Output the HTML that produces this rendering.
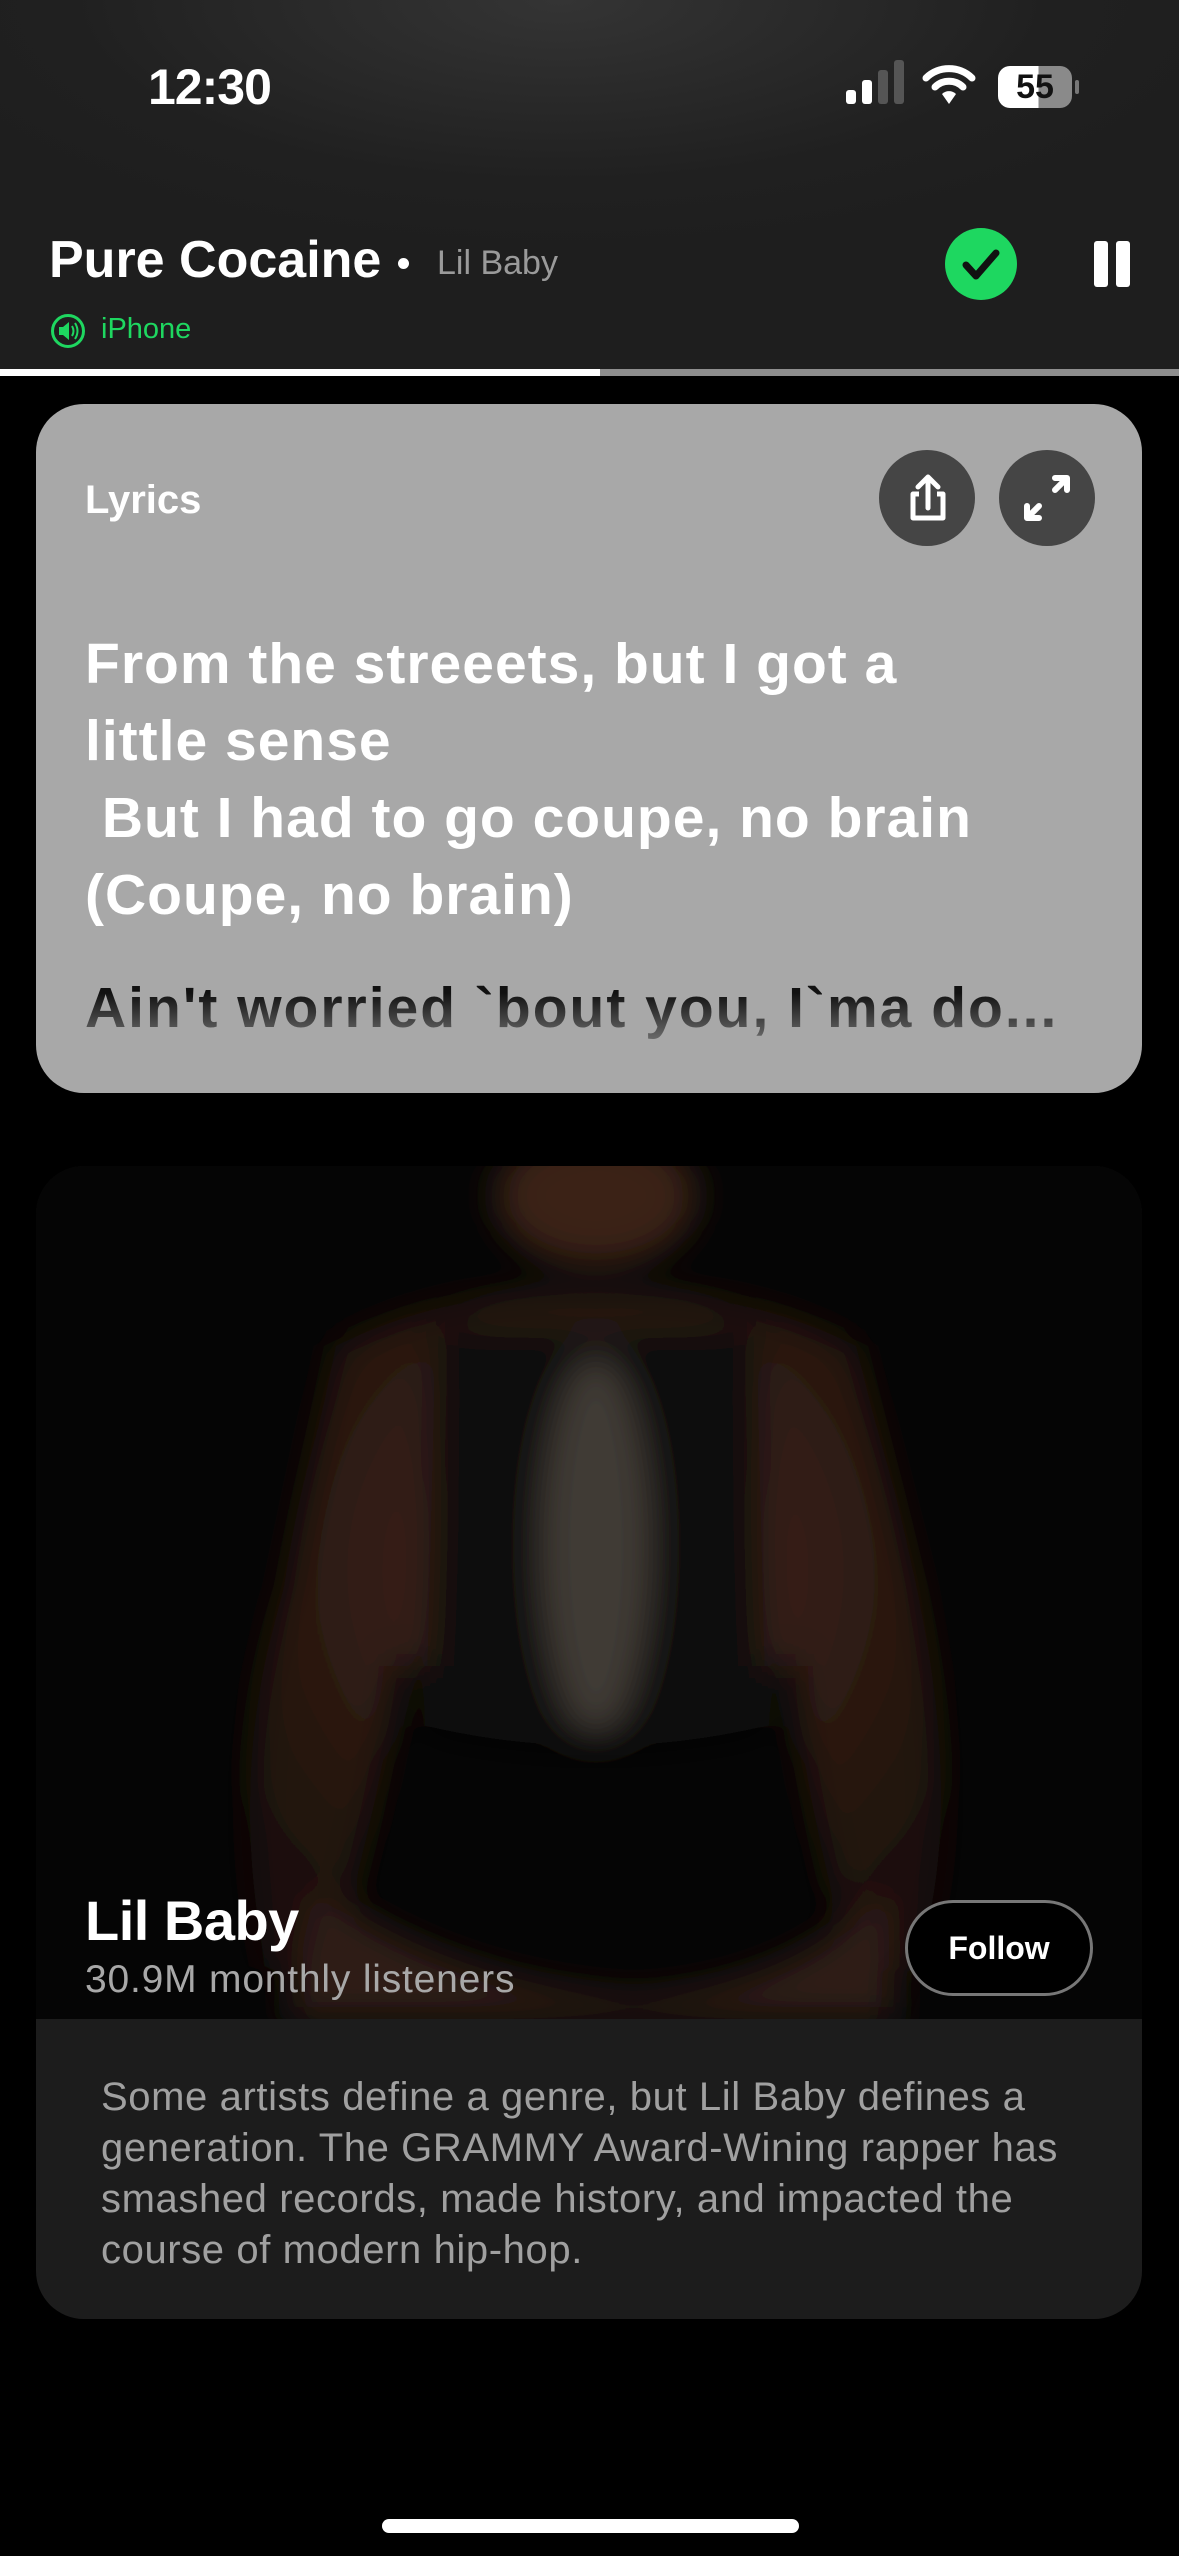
<!DOCTYPE html>
<html><head><meta charset="utf-8"><style>
*{margin:0;padding:0;box-sizing:border-box}
body{width:1179px;height:2556px;background:#000;font-family:"Liberation Sans",sans-serif;position:relative;overflow:hidden;color:#fff}
.hdr{position:absolute;left:0;top:0;width:1179px;height:372px;background:radial-gradient(ellipse 700px 260px at 560px 0,#343434,#202020 70%,#1e1e1e)}
.abs{position:absolute}
.card{position:absolute;left:36px;top:404px;width:1106px;height:689px;background:#a8a8a8;border-radius:48px}
.circ{position:absolute;width:96px;height:96px;border-radius:50%;background:#454545}
.lyr{position:absolute;left:85px;font-weight:bold;font-size:57px;letter-spacing:1px;line-height:77px;color:#fff}
.art{position:absolute;left:36px;top:1166px;width:1106px;height:1153px;border-radius:48px;overflow:hidden;background:#1c1c1c}
.img{position:absolute;left:0;top:0;width:1106px;height:853px;background:#050505}
</style></head><body>
<div class="hdr"></div>
<div class="abs" style="left:148px;top:58px;font-size:50px;font-weight:bold;letter-spacing:-1px">12:30</div>
<div class="abs" style="left:846px;top:90px;width:10px;height:14px;background:#fff;border-radius:3px"></div>
<div class="abs" style="left:862px;top:80px;width:10px;height:24px;background:#fff;border-radius:3px"></div>
<div class="abs" style="left:878px;top:70px;width:10px;height:34px;background:#555;border-radius:3px"></div>
<div class="abs" style="left:894px;top:60px;width:10px;height:44px;background:#555;border-radius:3px"></div>
<svg class="abs" style="left:922px;top:62px" width="54" height="44" viewBox="0 0 54 44"><path d="M4 16 A33 33 0 0 1 50 16" stroke="#fff" stroke-width="7" fill="none" stroke-linecap="round"/><path d="M13 25 A20 20 0 0 1 41 25" stroke="#fff" stroke-width="7" fill="none" stroke-linecap="round"/><path d="M20 32 L27 42 L34 32 A10 10 0 0 0 20 32Z" fill="#fff"/></svg>
<div class="abs" style="left:998px;top:66px;width:74px;height:42px;border-radius:12px;background:linear-gradient(90deg,#fff 0 55%,#8a8a8a 55%);color:#111;font-weight:bold;font-size:34px;text-align:center;line-height:42px">55</div>
<div class="abs" style="left:1075px;top:80px;width:4px;height:14px;background:#777;border-radius:2px"></div>

<div class="abs" style="left:49px;top:230px;font-size:52px;font-weight:bold;letter-spacing:0px">Pure Cocaine</div>
<div class="abs" style="left:398px;top:258px;width:11px;height:11px;border-radius:50%;background:#fff"></div>
<div class="abs" style="left:437px;top:244px;font-size:34px;color:#9a9a9a">Lil Baby</div>
<svg class="abs" style="left:50px;top:313px" width="36" height="36" viewBox="0 0 36 36"><circle cx="18" cy="18" r="15.5" fill="none" stroke="#1ed760" stroke-width="3"/><path d="M9 14h4l6-5v18l-6-5H9z" fill="#1ed760"/><path d="M22 13q3 5 0 10M25 10q5 8 0 16" stroke="#1ed760" stroke-width="2" fill="none"/></svg>
<div class="abs" style="left:101px;top:313px;font-size:29px;color:#1ed760">iPhone</div>
<svg class="abs" style="left:944px;top:227px" width="74" height="74" viewBox="0 0 74 74"><circle cx="37" cy="37" r="36" fill="#1ed760"/><path d="M22 38l10 11 20-23" stroke="#111" stroke-width="7" fill="none" stroke-linecap="round" stroke-linejoin="round"/></svg>
<div class="abs" style="left:1094px;top:241px;width:14px;height:46px;background:#fff;border-radius:3px"></div>
<div class="abs" style="left:1116px;top:241px;width:14px;height:46px;background:#fff;border-radius:3px"></div>
<div class="abs" style="left:0;top:369px;width:600px;height:7px;background:#fff"></div>
<div class="abs" style="left:600px;top:369px;width:579px;height:7px;background:#8e8e8e"></div>

<div class="card"></div>
<div class="abs" style="left:85px;top:478px;font-size:40px;font-weight:bold">Lyrics</div>
<div class="circ" style="left:879px;top:450px"></div>
<div class="circ" style="left:999px;top:450px"></div>
<svg class="abs" style="left:879px;top:450px" width="96" height="96" viewBox="0 0 96 96"><path d="M40 44h-6v24h30V44h-6" stroke="#fff" stroke-width="5" fill="none" stroke-linejoin="round"/><path d="M49 58V28M39 37l10-10 10 10" stroke="#fff" stroke-width="5" fill="none" stroke-linecap="round" stroke-linejoin="round"/></svg>
<svg class="abs" style="left:999px;top:450px" width="96" height="96" viewBox="0 0 96 96"><path d="M56 40l12-12M56 28h12v12M40 56L28 68M28 56v12h12" stroke="#fff" stroke-width="6" fill="none" stroke-linecap="round" stroke-linejoin="round"/></svg>
<div class="lyr" style="top:626px">From the streeets, but I got a<br>little sense<br>&nbsp;But I had to go coupe, no brain<br>(Coupe, no brain)</div>
<div class="lyr" style="top:970px;letter-spacing:2px;background:linear-gradient(#111 30%,#6a6a6a 90%);-webkit-background-clip:text;background-clip:text;color:transparent">Ain't worried `bout you, I`ma do...</div>

<div class="art">
<div class="img">
<svg width="1106" height="853" viewBox="0 0 1106 853">
<defs>
<filter id="b"><feGaussianBlur stdDeviation="18"/></filter>
<radialGradient id="sk" cx="50%" cy="40%" r="60%"><stop offset="0" stop-color="#4a2c1f"/><stop offset="1" stop-color="#1e110b"/></radialGradient>
</defs>
<rect width="1106" height="853" fill="#050505"/>
<g filter="url(#b)">
<ellipse cx="560" cy="30" rx="100" ry="70" fill="#3a2218"/>
<path d="M300 180 Q420 120 560 130 Q700 120 820 180 L880 420 Q930 650 880 800 L820 820 Q760 600 760 500 L360 500 Q350 620 290 820 L230 800 Q190 600 250 420Z" fill="url(#sk)"/>
<path d="M400 160 L720 160 L730 560 Q560 600 390 560Z" fill="#080808"/>
<path d="M280 720 Q420 820 600 830 Q760 820 850 720 L860 853 L250 853Z" fill="#2e1c13"/>
<ellipse cx="560" cy="380" rx="55" ry="190" fill="#6e665c" opacity="0.55"/>
</g>
</svg>
</div>
<div class="abs" style="left:49px;top:722px;font-size:56px;font-weight:bold;letter-spacing:-0.5px">Lil Baby</div>
<div class="abs" style="left:49px;top:792px;font-size:39px;color:#a8a8a8;letter-spacing:0.8px">30.9M monthly listeners</div>
<div class="abs" style="left:869px;top:734px;width:188px;height:96px;border:3px solid #777;border-radius:48px;background:#000;font-size:32px;font-weight:bold;text-align:center;line-height:90px">Follow</div>
<div class="abs" style="left:65px;top:906px;width:1000px;font-size:40px;line-height:51px;color:#a0a0a0;letter-spacing:0.6px">Some artists define a genre, but Lil Baby defines a<br>generation. The GRAMMY Award-Wining rapper has<br>smashed records, made history, and impacted the<br>course of modern hip-hop.</div>
</div>

<div class="abs" style="left:382px;top:2519px;width:417px;height:14px;border-radius:7px;background:#fff"></div>
</body></html>
